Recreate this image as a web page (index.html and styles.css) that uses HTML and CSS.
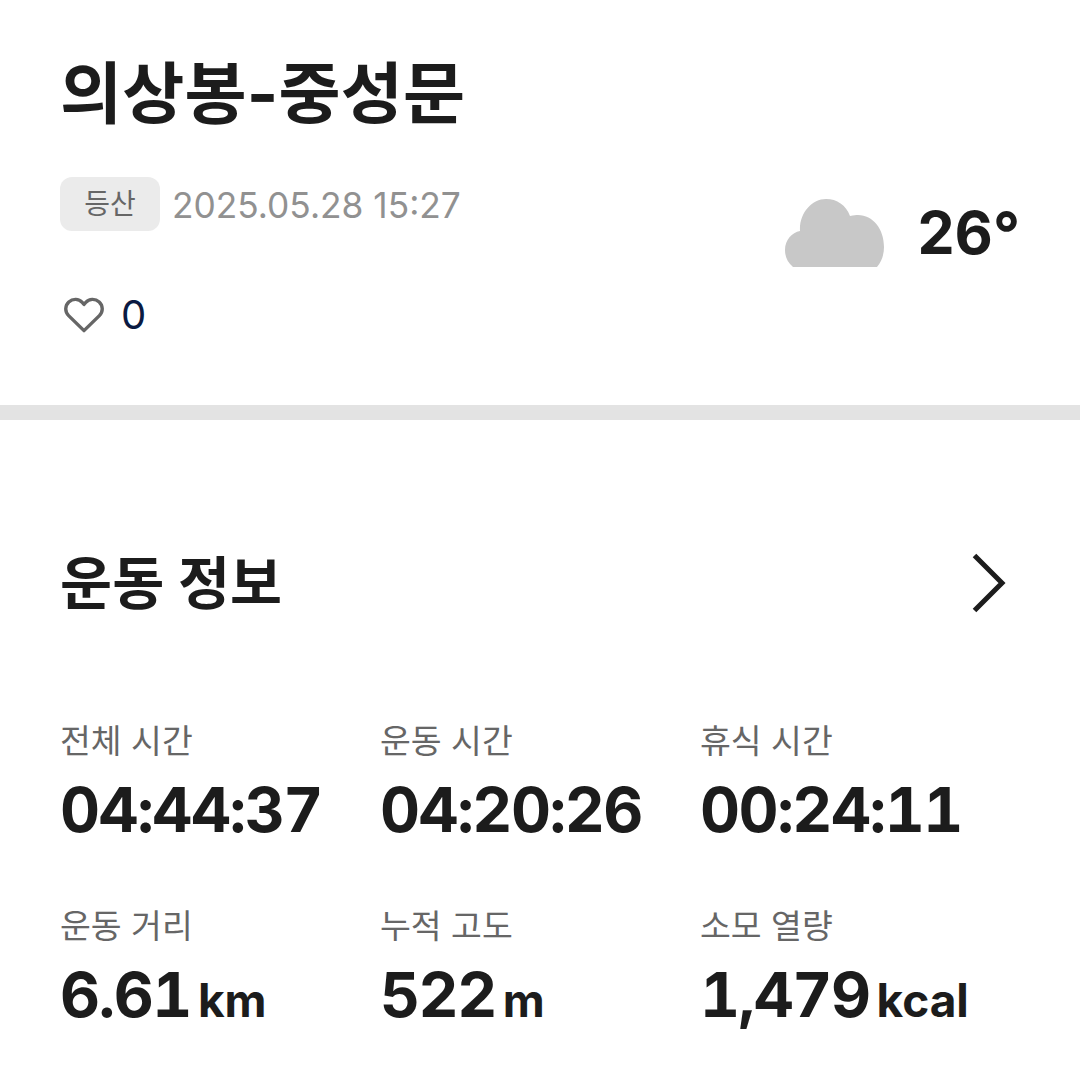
FILE: index.html
```html
<!DOCTYPE html>
<html lang="ko">
<head>
    <meta charset="UTF-8">
    <meta name="viewport" content="width=device-width, initial-scale=1.0">
    <title>의상봉-중성문</title>
    <link rel="stylesheet" href="styles.css">
</head>
<body>
    <section class="summary">
        <h1 class="title">의상봉-중성문</h1>
        <div class="summary-row">
            <div class="summary-left">
                <div class="meta">
                    <span class="tag">등산</span>
                    <span class="date">2025.05.28 15:27</span>
                </div>
                <div class="likes">
                    <svg class="heart" width="40" height="36" viewBox="0 0 40 36" fill="none" stroke="#666666" stroke-width="3.4" stroke-linejoin="round">
                        <path d="M20 33.6 L4.6 18.6 C0.6 14.6 1 8.6 4.8 5 C8.8 1.4 14.8 1.6 18.2 5.4 L20 7.4 L21.8 5.4 C25.2 1.6 31.2 1.4 35.2 5 C39 8.6 39.4 14.6 35.4 18.6 Z"/>
                    </svg>
                    <span class="like-count">0</span>
                </div>
            </div>
            <div class="weather">
                <svg class="cloud" width="100" height="68" viewBox="0 0 100 68">
                    <path d="M8 68 C2.500 63 0 58 0 51 C0 41 7 33.500 15 32 C14 14 27 0 41 0 C52 0 61 6 65 17 C69 16 71 16 73 16 C88 16 99 30 99 48 C99 55 97 62 92 68 Z" fill="#c8c8c8"/>
                </svg>
                <span class="temp">26°</span>
            </div>
        </div>
    </section>

    <div class="divider"></div>

    <section class="workout">
        <div class="workout-head">
            <h2 class="workout-title">운동 정보</h2>
            <svg class="chevron" width="34" height="60" viewBox="0 0 34 60" fill="none" stroke="#1c1c1c" stroke-width="5">
                <path d="M2.500 2.500 L30 30 L2.500 57.500"/>
            </svg>
        </div>
        <div class="stats">
            <div class="stat">
                <div class="stat-label">전체 시간</div>
                <div class="stat-value">04:44:37</div>
            </div>
            <div class="stat">
                <div class="stat-label">운동 시간</div>
                <div class="stat-value">04:20:26</div>
            </div>
            <div class="stat">
                <div class="stat-label">휴식 시간</div>
                <div class="stat-value">00:24:11</div>
            </div>
            <div class="stat">
                <div class="stat-label">운동 거리</div>
                <div class="stat-value">6.61<span class="unit">km</span></div>
            </div>
            <div class="stat">
                <div class="stat-label">누적 고도</div>
                <div class="stat-value">522<span class="unit">m</span></div>
            </div>
            <div class="stat">
                <div class="stat-label">소모 열량</div>
                <div class="stat-value">1,479<span class="unit">kcal</span></div>
            </div>
        </div>
    </section>
</body>
</html>
```

FILE: styles.css
```css
body {
    font-family: Inter, "Noto Sans CJK KR", sans-serif;
    margin: 0;
    background-color: #ffffff;
    color: #1c1c1c;
}
.summary {
    height: 405px;
    padding: 0 60px;
    box-sizing: border-box;
}
.title {
    margin: 0;
    padding-top: 48px;
    font-size: 67.5px;
    line-height: 92px;
    font-weight: 700;
    letter-spacing: 0.15px;
}
.summary-row {
    display: flex;
    justify-content: space-between;
    margin-top: 37px;
}
.meta {
    display: flex;
    align-items: center;
    gap: 12px;
}
.tag {
    width: 100px;
    height: 54px;
    line-height: 54px;
    text-align: center;
    font-size: 28px;
    color: #666666;
    background-color: #ebebeb;
    border-radius: 12px;
}
.date {
    padding-top: 2px;
    font-size: 35.3px;
    color: #919191;
}
.likes {
    display: flex;
    align-items: center;
    gap: 17px;
    margin-top: 59px;
    padding-left: 4px;
}
.like-count {
    font-size: 40px;
    color: #0a1a42;
}
.weather {
    display: flex;
    align-items: center;
    gap: 32px;
    height: 68px;
    margin-top: 22px;
}
.temp {
    padding-bottom: 2px;
    font-size: 59px;
    font-weight: 700;
}
.divider {
    height: 15px;
    background-color: #e3e3e3;
}
.workout {
    padding: 0 60px;
}
.workout-head {
    display: flex;
    justify-content: space-between;
    align-items: center;
    margin-top: 133px;
    padding-right: 14px;
}
.workout-title {
    margin: 0;
    padding-top: 2px;
    font-size: 56.5px;
    line-height: 58px;
    font-weight: 700;
    letter-spacing: 0.2px;
}
.stats {
    display: grid;
    grid-template-columns: repeat(3, 320px);
    row-gap: 47px;
    margin-top: 105px;
}
.stat-label {
    font-size: 33.5px;
    line-height: 46px;
    color: #666666;
}
.stat-value {
    font-size: 62px;
    line-height: 92px;
    font-weight: 700;
    letter-spacing: -1.5px;
    font-variant-numeric: tabular-nums;
}
.unit {
    font-size: 46px;
    margin-left: 7px;
    letter-spacing: 0;
}
```
